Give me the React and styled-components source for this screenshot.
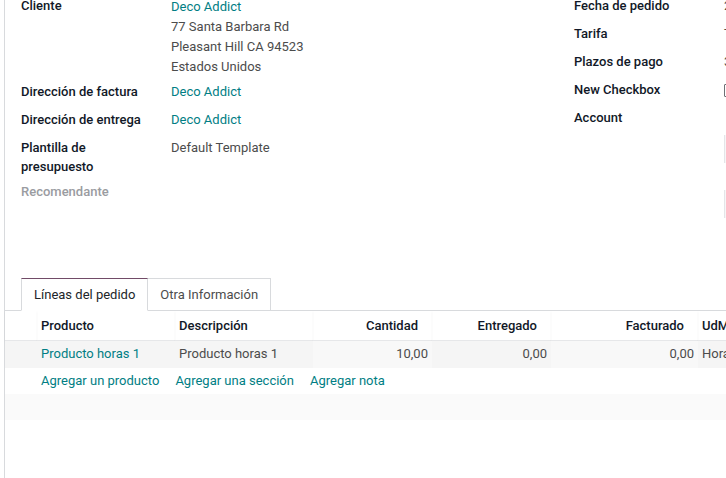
import styled, { createGlobalStyle } from "styled-components";

const GlobalStyle = createGlobalStyle`
  html, body {
    margin: 0;
    padding: 0;
    background: #ffffff;
    overflow: hidden;
  }
  body {
    font-family: Roboto, "Noto Sans", "Liberation Sans", sans-serif;
    font-size: 13px;
    color: #4c4c4c;
  }
`;

const Page = styled.div`
  width: 1140px;
  height: 478px;
  padding-left: 4px;
  overflow: hidden;
`;

const Sheet = styled.div`
  border-left: 1px solid #d8dadd;
  min-height: 520px;
  margin-top: -8px;
  padding: 0 16px;
`;

const Group = styled.div`
  display: grid;
  grid-template-columns: 537px 1fr;
  gap: 16px;
`;

const Fields = styled.div`
  display: grid;
  grid-template-columns: 150px 1fr;
  align-content: start;
`;

const Label = styled.div`
  padding: ${(p) => p.$pad || "4px 0"};
  line-height: ${(p) => p.$lh || "20px"};
  font-weight: 500;
  color: ${(p) => (p.$muted ? "#9a9ca1" : "#111827")};
`;

const Value = styled.div`
  padding: ${(p) => p.$pad || "4px 0"};
  line-height: 20px;
  color: #4c4c4c;
  white-space: nowrap;
`;

const Link = styled.div`
  color: #017e84;
  line-height: ${(p) => p.$lh || "20px"};
`;

const Checkbox = styled.span`
  display: inline-block;
  width: 11px;
  height: 11px;
  margin-top: 4px;
  border: 1px solid #6c6f74;
  border-radius: 1px;
  vertical-align: top;
`;

const FaintBox = styled.div`
  height: 28px;
  width: 160px;
  margin-top: ${(p) => p.$top || "0"};
  background: #f6f6f7;
  border-left: 1px solid #e4e5e8;
`;

const Notebook = styled.div`
  margin-top: 60px;
`;

const Tabs = styled.div`
  display: flex;
  padding-left: 16px;
  margin: 0 -16px;
  border-bottom: 1px solid #d8dadd;
`;

const Tab = styled.div`
  height: 31px;
  line-height: 32px;
  padding: 0 12px;
  margin-bottom: -1px;
  border: 1px solid #d8dadd;
  border-left-width: ${(p) => (p.$first ? "1px" : "0")};
  border-top-color: ${(p) => (p.$active ? "#714b67" : "#d8dadd")};
  border-bottom-color: ${(p) => (p.$active ? "#ffffff" : "#d8dadd")};
  color: ${(p) => (p.$active ? "#212529" : "#4c4c4c")};
  background: #ffffff;
  white-space: nowrap;
`;

const Table = styled.div`
  margin: 0 -16px;
  display: grid;
  grid-template-columns: 32px 138px 138px 119px 119px 147px 120px 1fr;
`;

const Row = styled.div`
  display: contents;
`;

const HeadCell = styled.div`
  height: 29px;
  line-height: 30px;
  padding: ${(p) => (p.$num ? "0 14px 0 4px" : "0 4px")};
  text-align: ${(p) => (p.$num ? "right" : "left")};
  font-weight: 500;
  color: #111827;
  white-space: nowrap;
  border-bottom: 1px solid #e6e7e9;
  box-shadow: 0 1px 2px rgba(0, 0, 0, 0.04);
`;

const Cell = styled.div`
  height: 27px;
  line-height: 26px;
  padding: 0 4px;
  text-align: ${(p) => (p.$num ? "right" : "left")};
  background: ${(p) => (p.$light ? "#f8f8f8" : "#f5f5f5")};
  color: ${(p) => (p.$link ? "#017e84" : "#4c4c4c")};
  white-space: nowrap;
  overflow: hidden;
`;

const AddRow = styled.div`
  grid-column: 1 / -1;
  display: flex;
  gap: 16px;
  height: 26px;
  line-height: 26px;
  padding-left: 36px;
`;

const AddLink = styled.span`
  color: #017e84;
`;

const EmptyRow = styled.div`
  grid-column: 1 / -1;
  height: 26px;
  background: #fafafa;
`;

export default function App() {
  return (
    <Page>
      <GlobalStyle />
      <Sheet>
        <Group>
          <Fields>
            <Label>Cliente</Label>
            <Value $pad="4px 0 1px">
              <Link $lh="21px">Deco Addict</Link>
              <div>77 Santa Barbara Rd</div>
              <div>Pleasant Hill CA 94523</div>
              <div>Estados Unidos</div>
            </Value>
            <Label>Dirección de factura</Label>
            <Value>
              <Link>Deco Addict</Link>
            </Value>
            <Label>Dirección de entrega</Label>
            <Value>
              <Link>Deco Addict</Link>
            </Value>
            <Label $lh="19px">
              Plantilla de
              <br />
              presupuesto
            </Label>
            <Value>Default Template</Value>
            <Label $muted $pad="2px 0 5px">
              Recomendante
            </Label>
            <Value $pad="2px 0 5px" />
          </Fields>
          <Fields>
            <Label>Fecha de pedido</Label>
            <Value>27/12/2023 10:32:15</Value>
            <Label>Tarifa</Label>
            <Value>Tarifa pública (USD)</Value>
            <Label>Plazos de pago</Label>
            <Value>30 días</Value>
            <Label>New Checkbox</Label>
            <Value>
              <Checkbox />
            </Value>
            <Label>Account</Label>
            <Value />
            <div />
            <Value $pad="3px 0 0">
              <FaintBox />
              <FaintBox $top="27px" />
            </Value>
          </Fields>
        </Group>

        <Notebook>
          <Tabs>
            <Tab $first $active>
              Líneas del pedido
            </Tab>
            <Tab>Otra Información</Tab>
          </Tabs>
          <Table>
            <Row>
              <HeadCell />
              <HeadCell>Producto</HeadCell>
              <HeadCell>Descripción</HeadCell>
              <HeadCell $num>Cantidad</HeadCell>
              <HeadCell $num>Entregado</HeadCell>
              <HeadCell $num>Facturado</HeadCell>
              <HeadCell>UdM</HeadCell>
              <HeadCell />
            </Row>
            <Row>
              <Cell />
              <Cell $link>Producto horas 1</Cell>
              <Cell>Producto horas 1</Cell>
              <Cell $num $light>
                10,00
              </Cell>
              <Cell $num>0,00</Cell>
              <Cell $num $light>
                0,00
              </Cell>
              <Cell>Horas</Cell>
              <Cell />
            </Row>
            <AddRow>
              <AddLink>Agregar un producto</AddLink>
              <AddLink>Agregar una sección</AddLink>
              <AddLink>Agregar nota</AddLink>
            </AddRow>
            <EmptyRow />
          </Table>
        </Notebook>
      </Sheet>
    </Page>
  );
}
